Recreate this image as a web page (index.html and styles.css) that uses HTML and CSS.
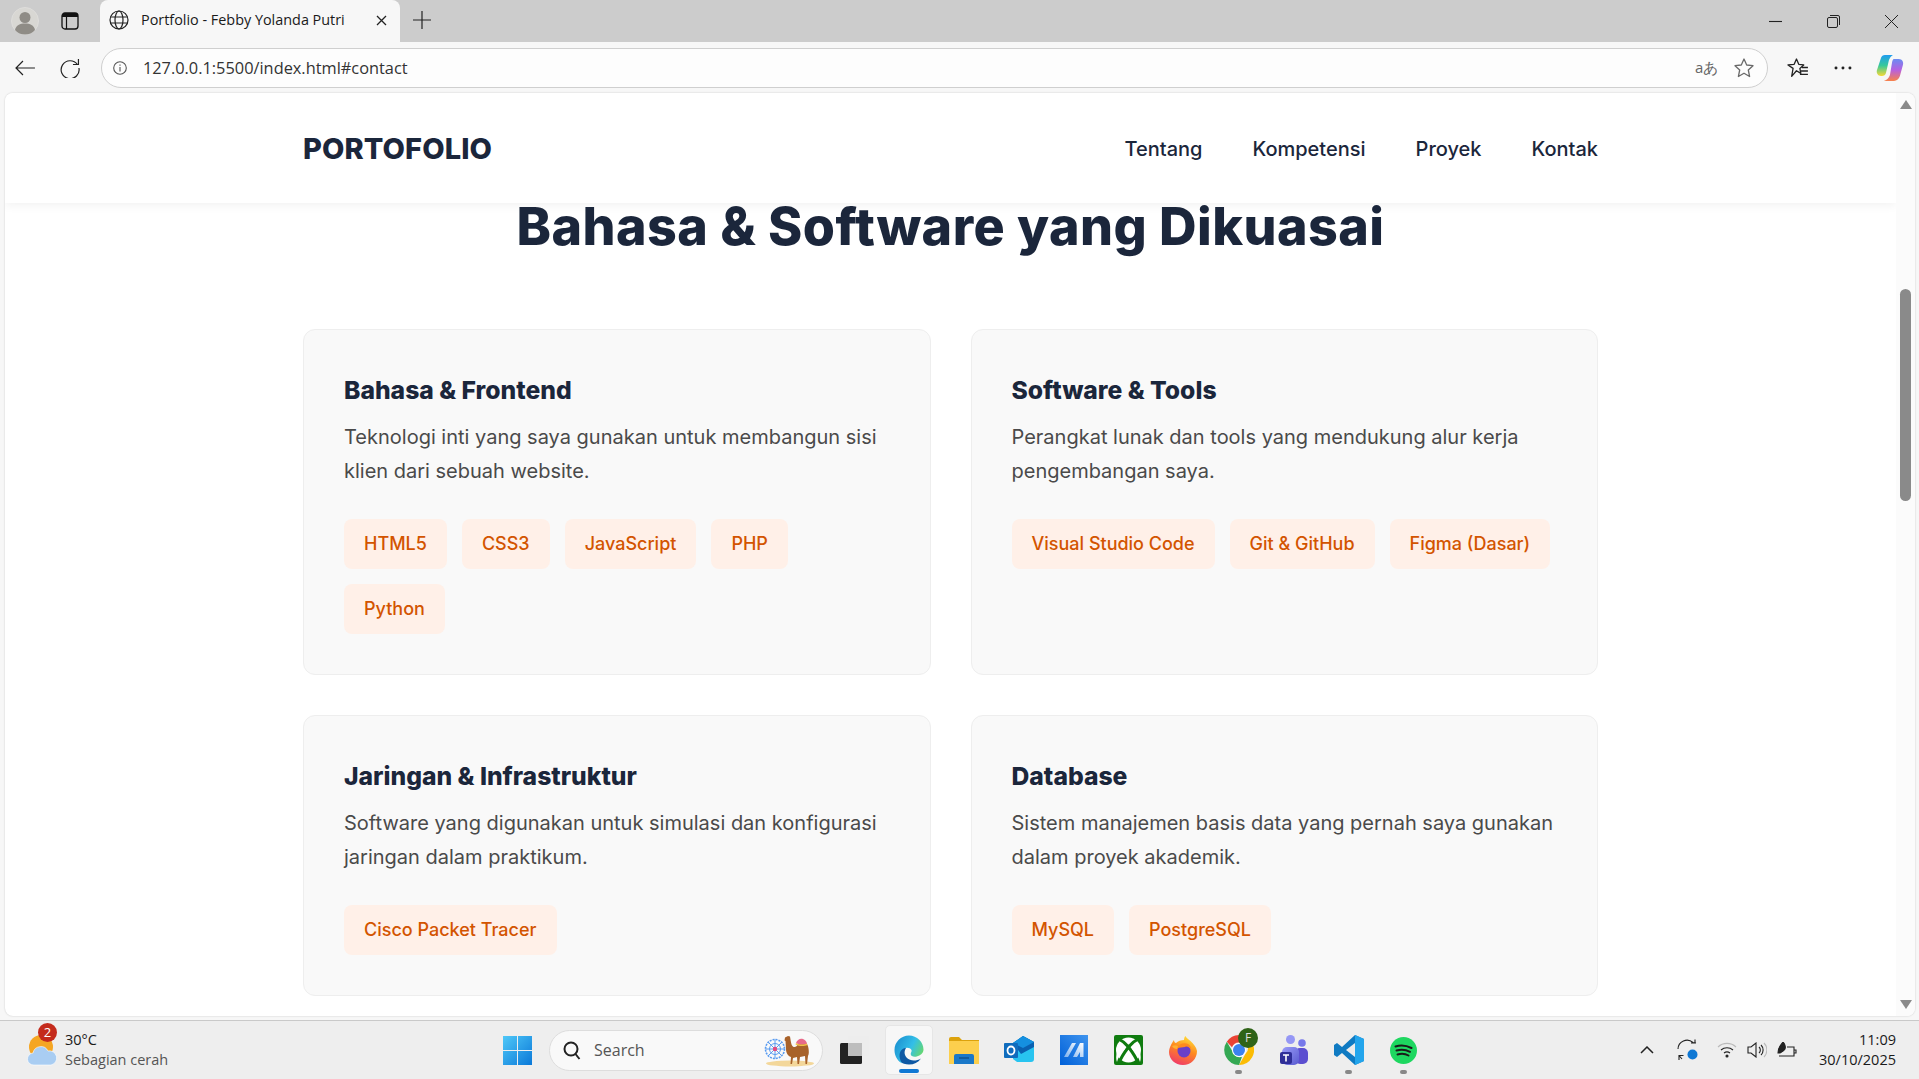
FILE: index.html
```html
<!DOCTYPE html>
<html lang="id">
<head>
    <meta charset="UTF-8">
    <title>Portfolio - Febby Yolanda Putri</title>
    <link rel="stylesheet" href="styles.css">
</head>
<body>
    <div class="tabstrip">
        <div class="profile"><svg width="28" height="28" viewBox="0 0 28 28"><circle cx="14" cy="14" r="13.500" fill="#d8d7d3" stroke="#dedddb"/><circle cx="14" cy="10.500" r="5.500" fill="#8f8c86"/><path d="M4 23c1-5 5-6.500 10-6.500s9 1.500 10 6.500c-2.500 3-6 4.500-10 4.500s-7.500-1.500-10-4.500z" fill="#8f8c86"/></svg></div>
        <div class="tabs-btn"><svg width="18" height="18" viewBox="0 0 18 18"><rect x="1" y="1" width="16" height="16" rx="3" fill="none" stroke="#111" stroke-width="1.300"/><path d="M1 4a3 3 0 0 1 3-3h10a3 3 0 0 1 3 3v1H1z" fill="#111"/><path d="M5.500 5v12" stroke="#111" stroke-width="1.200"/></svg></div>
        <div class="tab">
            <svg width="20" height="20" viewBox="0 0 20 20" fill="none" stroke="#222" stroke-width="1.200"><circle cx="10" cy="10" r="9"/><ellipse cx="10" cy="10" rx="4" ry="9"/><path d="M1.500 7h17M1.500 13h17"/></svg>
            <span class="tab-title">Portfolio - Febby Yolanda Putri</span>
            <svg class="tab-close" width="11" height="11" viewBox="0 0 11 11" stroke="#222" stroke-width="1.300"><path d="M1 1l9 9M10 1l-9 9"/></svg>
        </div>
        <svg class="new-tab" width="18" height="18" viewBox="0 0 18 18" stroke="#222" stroke-width="1.200"><path d="M9 0v18M0 9h18"/></svg>
        <div class="win-controls">
            <svg width="13" height="13" viewBox="0 0 13 13" stroke="#222" stroke-width="1.100"><path d="M0 6.500h13"/></svg>
            <svg width="13" height="13" viewBox="0 0 13 13" fill="none" stroke="#222" stroke-width="1"><rect x=".5" y="2.500" width="10" height="10" rx="1.500"/><path d="M3 .5h8a1.500 1.500 0 0 1 1.500 1.500v8"/></svg>
            <svg width="13" height="13" viewBox="0 0 13 13" stroke="#222" stroke-width="1"><path d="M0 0l13 13M13 0L0 13"/></svg>
        </div>
    </div>

    <div class="toolbar">
        <svg class="tool-back" width="20" height="16" viewBox="0 0 20 16" fill="none" stroke="#222" stroke-width="1.200"><path d="M20 8H1M8 1L1 8l7 7"/></svg>
        <svg class="tool-reload" width="20" height="20" viewBox="0 0 20 20" fill="none" stroke="#222" stroke-width="1.200"><path d="M17.500 6.500A9 9 0 1 0 19 10"/><path d="M18.500 1v5.500H13"/></svg>
        <div class="addressbar">
            <svg width="14" height="14" viewBox="0 0 14 14" fill="none" stroke="#555" stroke-width="1.100"><circle cx="7" cy="7" r="6.300"/><path d="M7 6v4.500M7 3.500v1.300"/></svg>
            <span class="url">127.0.0.1:5500/index.html#contact</span>
            <span class="translate">aあ</span>
            <svg width="22" height="22" viewBox="0 0 22 22" fill="none" stroke="#6a6a6a" stroke-width="1.300" stroke-linejoin="round"><path d="M11 2l2.700 6 6.300.7-4.700 4.300 1.300 6.500-5.600-3.300-5.600 3.300 1.300-6.500L2 8.700 8.300 8z"/></svg>
        </div>
        <svg class="tool-fav" width="22" height="20" viewBox="0 0 22 20" fill="none" stroke="#222" stroke-width="1.300" stroke-linejoin="round"><path d="M9.500 1l2.300 5.300 5 .6-3.900 3.500 1 5-4.400-2.600-4.800 5.600 1.400-8L1 6.900l6.200-.6z"/><path d="M15 9.500h6M14 13h7M13 16.500h8"/></svg>
        <svg class="tool-more" width="18" height="4" viewBox="0 0 18 4" fill="#222"><circle cx="2" cy="2" r="1.500"/><circle cx="9" cy="2" r="1.500"/><circle cx="16" cy="2" r="1.500"/></svg>
        <svg class="tool-copilot" width="28" height="28" viewBox="0 0 28 28"><defs><linearGradient id="cp1" x1="0" y1="0" x2="0" y2="1"><stop offset="0" stop-color="#1f9cf0"/><stop offset=".5" stop-color="#37c99a"/><stop offset="1" stop-color="#f6d936"/></linearGradient><linearGradient id="cp2" x1="0" y1="0" x2="0" y2="1"><stop offset="0" stop-color="#6a8cf2"/><stop offset=".5" stop-color="#b660e0"/><stop offset="1" stop-color="#f8824a"/></linearGradient></defs><path d="M9 1h8c-2 1-3 3-4 5l-3 13c-.5 2-2 3-4 3H5c-3 0-5-3-4-6L5 4c.6-2 2-3 4-3z" fill="url(#cp1)"/><path d="M18 5h5c3 0 5 3 4 6l-3 11c-1 3-3 5-6 5H8c3-1 5-3 6-6l2-12c.3-2 1-4 2-4z" fill="url(#cp2)"/></svg>
    </div>

    <div class="viewport">
        <div class="page">
            <header class="site-header">
                <div class="wrap header-inner">
                    <div class="logo">PORTOFOLIO</div>
                    <nav class="site-nav">
                        <a>Tentang</a>
                        <a>Kompetensi</a>
                        <a>Proyek</a>
                        <a>Kontak</a>
                    </nav>
                </div>
            </header>

            <section class="skills">
                <div class="wrap">
                    <h2 class="section-title">Bahasa &amp; Software yang Dikuasai</h2>
                    <div class="skill-grid">
                        <div class="skill-card">
                            <h3>Bahasa &amp; Frontend</h3>
                            <p>Teknologi inti yang saya gunakan untuk membangun sisi klien dari sebuah website.</p>
                            <div class="tag-list">
                                <span class="tag">HTML5</span>
                                <span class="tag">CSS3</span>
                                <span class="tag">JavaScript</span>
                                <span class="tag">PHP</span>
                                <span class="tag">Python</span>
                            </div>
                        </div>
                        <div class="skill-card">
                            <h3>Software &amp; Tools</h3>
                            <p>Perangkat lunak dan tools yang mendukung alur kerja pengembangan saya.</p>
                            <div class="tag-list">
                                <span class="tag">Visual Studio Code</span>
                                <span class="tag">Git &amp; GitHub</span>
                                <span class="tag">Figma (Dasar)</span>
                            </div>
                        </div>
                        <div class="skill-card">
                            <h3>Jaringan &amp; Infrastruktur</h3>
                            <p>Software yang digunakan untuk simulasi dan konfigurasi jaringan dalam praktikum.</p>
                            <div class="tag-list">
                                <span class="tag">Cisco Packet Tracer</span>
                            </div>
                        </div>
                        <div class="skill-card">
                            <h3>Database</h3>
                            <p>Sistem manajemen basis data yang pernah saya gunakan dalam proyek akademik.</p>
                            <div class="tag-list">
                                <span class="tag">MySQL</span>
                                <span class="tag">PostgreSQL</span>
                            </div>
                        </div>
                    </div>
                </div>
            </section>
        </div>
        <div class="scrollbar">
            <span class="arrow-up"></span>
            <div class="scroll-track"><div class="scroll-thumb"></div></div>
            <span class="arrow-down"></span>
        </div>
    </div>

    <div class="taskbar">
        <div class="weather">
            <div class="weather-icon">
                <svg width="30" height="34" viewBox="0 0 30 34"><circle cx="14" cy="15" r="12" fill="#f5a623"/><path d="M7 33a6 6 0 0 1-1-12 8 8 0 0 1 15-2 7 7 0 0 1 3 14z" fill="#a9cdf2" stroke="#fff" stroke-width=".6"/></svg>
                <span class="weather-badge">2</span>
            </div>
            <div class="weather-text">
                <div class="temp">30°C</div>
                <div class="cond">Sebagian cerah</div>
            </div>
        </div>

        <div class="task-center">
            <svg class="task-win" width="29" height="29" viewBox="0 0 29 29"><defs><linearGradient id="win" x1="0" y1="0" x2="1" y2="1"><stop offset="0" stop-color="#4fc8f8"/><stop offset="1" stop-color="#0a78d8"/></linearGradient></defs><path d="M0 0h14v14H0zM15 0h14v14H15zM0 15h14v14H0zM15 15h14v14H15z" fill="url(#win)"/></svg>
            <div class="task-search">
                <svg width="18" height="19" viewBox="0 0 18 19" fill="none" stroke="#222" stroke-width="2"><circle cx="8" cy="8" r="6.500"/><path d="M12.500 13l4 5"/></svg>
                <span>Search</span>
                <svg class="search-art" width="50" height="34" viewBox="0 0 50 34">
                    <ellipse cx="26" cy="30.500" rx="24" ry="3" fill="#f3d79a"/>
                    <g fill="none" stroke="#5a9cf0" stroke-width="1">
                        <circle cx="11" cy="16" r="9.500" stroke-width="1.600" stroke-dasharray="2 1"/>
                        <circle cx="11" cy="16" r="5.500"/>
                        <path d="M11 6.500v19M1.500 16h19M4.300 9.300l13.400 13.400M17.700 9.300L4.300 22.700"/>
                    </g>
                    <circle cx="11" cy="16" r="2.200" fill="#e8487e"/>
                    <path d="M21 4.500l3-1.500 2 .5.500 3c.5 3 1 7 3.500 7.500 2 .2 3-1 4-3 1-2.500 4-4 6.500-2.500 2.500 1.500 3.500 4 4 7 .5 3 .5 6-.5 7.500l-1 8h-1.500l-.5-8-5 1-1 7h-1.500l-.5-7-4 1-1 6h-1.500l.5-7c-3-1-5-4-5-8l-.5-8-1-.5z" fill="#a8622a"/>
                    <path d="M32 10c1-3 4-5 7-4 2 .7 3.500 2.500 4 4.500-3 1.500-8 1.500-11-.5z" fill="#e86a8a"/>
                    <path d="M32 10c3 2 8 2 11 .5l.3 1.500c-3 1.500-8 1.500-11.800-.5z" fill="#f2c14a"/>
                </svg>
            </div>
            <div class="task-app"><svg width="29" height="29" viewBox="0 0 29 29"><rect x="8" y="0" width="21" height="20" rx="1.500" fill="#ededed"/><rect x="0" y="7" width="22" height="21" rx="1.500" fill="#222"/><rect x="8" y="7" width="14" height="13" fill="#bdbdbd"/></svg></div>
            <div class="task-app is-active">
                <svg width="30" height="30" viewBox="0 0 30 30"><defs><linearGradient id="edge" x1="0" y1=".2" x2="1" y2=".7"><stop offset="0" stop-color="#1b8fd0"/><stop offset=".55" stop-color="#33bfe8"/><stop offset="1" stop-color="#6edb5e"/></linearGradient></defs><path d="M2 18c0 7 6 11.500 13 11.500 5 0 9-2 12-6-5 3-11 2.500-14-.5-3-3-3-7-1-10C7 11 2 13 2 18z" fill="#0d58a4"/><path d="M15 .5C7 .5.500 7 .5 15c0 6 3 11 8 13.500-3.500-4-4-10.500-1-13.500 3-3 8.500-3 10 0 .6 1.500-.8 2.500-.8 4 0 2.300 3 3.200 6 2.500 3.800-1 6.800-3.500 6.800-7C29.500 7 23 .5 15 .5z" fill="url(#edge)"/></svg>
                <span class="run-mark active-mark"></span>
            </div>
            <div class="task-app"><svg width="30" height="28" viewBox="0 0 30 28"><path d="M0 3a2 2 0 0 1 2-2h8l3 3h17v4H0z" fill="#dca20c"/><path d="M0 5h30v23H0z" fill="#fccf4d"/><path d="M5 20a2 2 0 0 1 2-2h16a2 2 0 0 1 2 2v8H5z" fill="#1a78c8"/><path d="M10 22h10" stroke="#0c4a80" stroke-width="1.200"/></svg></div>
            <div class="task-app"><svg width="30" height="28" viewBox="0 0 30 28"><path d="M9 7l10-7 11 6v17a3 3 0 0 1-3 3H13l-4-3z" fill="#28c4f0"/><path d="M19 0l11 6v5L17 18 9 7z" fill="#0a60b0"/><path d="M19 0l11 6-11 6-10-5z" fill="#1590e0"/><rect x="0" y="7" width="14" height="15" rx="1" fill="#0f6cbd"/><ellipse cx="7" cy="14.500" rx="3.500" ry="4" fill="none" stroke="#fff" stroke-width="1.800"/></svg></div>
            <div class="task-app"><svg width="28" height="30" viewBox="0 0 28 30"><defs><linearGradient id="msa" x1="0" y1="1" x2="1" y2="0"><stop offset="0" stop-color="#0060d8"/><stop offset="1" stop-color="#3f94ee"/></linearGradient><linearGradient id="msb" x1="0" y1="1" x2="1" y2="0"><stop offset="0" stop-color="#7fb2ee"/><stop offset="1" stop-color="#ffffff"/></linearGradient></defs><rect width="28" height="30" fill="url(#msa)"/><path d="M4 22L12 8h4L8 22zM13 22l7-14h3.500v14H20v-5l-3 5z" fill="url(#msb)"/></svg></div>
            <div class="task-app"><svg width="29" height="30" viewBox="0 0 29 30"><rect width="29" height="30" rx="2" fill="#107c10"/><circle cx="14.500" cy="15" r="12.500" fill="#fff"/><path d="M4.500 4C9 6 12 9 14.500 12 17 9 20 6 24.500 4" fill="none" stroke="#107c10" stroke-width="3"/><path d="M5 28c2-6 5-10 9.500-16C19 18 22 22 24 28" fill="none" stroke="#107c10" stroke-width="3"/><path d="M3 27c2-7 6-11 8-13L7 9C3 14 1 22 3 27zM26 27c-2-7-6-11-8-13l4-5c4 5 6 13 4 18z" fill="#fff"/></svg></div>
            <div class="task-app"><svg width="29" height="29" viewBox="0 0 29 29"><defs><linearGradient id="ff" x1=".7" y1="0" x2=".3" y2="1"><stop offset="0" stop-color="#ffe03a"/><stop offset=".45" stop-color="#ff8a1e"/><stop offset="1" stop-color="#f0386a"/></linearGradient></defs><path d="M2 9c1-2 2-4 3-5 0 2 1 3 2 3 2-2 5-3 8-3 0-1.500.5-3 1.500-4 .5 2 3 3 5 5 3 3 6 6 6.500 10 0 8-6 14-14 14C6 29 0 23 0 16c0-3 1-5 2-7z" fill="url(#ff)"/><circle cx="15" cy="15" r="6.500" fill="#6a3fc8"/><path d="M8 12c2-4 7-6 11-4 2 1 3 3 3 5-2-2-4-3-6-2-3 0-5 1-8 1z" fill="#ff8a1e"/><path d="M9 10c-2-1-4-1-6 0 1 2 3 3 5 3z" fill="#ffb030"/></svg></div>
            <div class="task-app">
                <svg width="30" height="30" viewBox="0 0 30 30"><path d="M15 0a15 15 0 0 1 13 7.500H15a7.500 7.500 0 0 0-7 4.700L2.800 6.800A15 15 0 0 1 15 0z" fill="#ea4335"/><path d="M28 7.500A15 15 0 0 1 15 30l6.500-11.200A7.500 7.500 0 0 0 21.500 7.500z" fill="#fbbc04"/><path d="M2.800 6.800L8.500 16.500a7.500 7.500 0 0 0 9.500 5.300L15 30A15 15 0 0 1 2.800 6.800z" fill="#34a853"/><circle cx="15" cy="15" r="7" fill="#fff"/><circle cx="15" cy="15" r="6" fill="#3b82f0"/></svg>
                <span class="avatar-badge">F</span>
                <span class="run-mark"></span>
            </div>
            <div class="task-app"><svg width="28" height="30" viewBox="0 0 28 30"><defs><linearGradient id="tm" x1="0" y1="0" x2="1" y2="1"><stop offset="0" stop-color="#9a9cf8"/><stop offset="1" stop-color="#5a5bd0"/></linearGradient></defs><circle cx="10.500" cy="4.500" r="4.500" fill="#9597f5"/><circle cx="22" cy="8" r="3.800" fill="#7678ea"/><rect x="15" y="13" width="13" height="16" rx="5" fill="#5c4fd0"/><rect x="2" y="12" width="17" height="18" rx="5" fill="url(#tm)"/><rect x="0" y="17" width="12" height="12" rx="2" fill="#2f2e98"/><path d="M3 20h6M6 20v6.500" stroke="#fff" stroke-width="1.600"/></svg></div>
            <div class="task-app">
                <svg width="30" height="30" viewBox="0 0 30 30"><path d="M21 0l9 4v22l-9 4L8 18l-5 4-3-2v-10l3-2 5 4z" fill="#0f7ac2"/><path d="M21 0l9 4v22l-9 4z" fill="#23a5ec"/><path d="M21 8l-9 7 9 7z" fill="#ececec"/></svg>
                <span class="run-mark"></span>
            </div>
            <div class="task-app">
                <svg width="27" height="27" viewBox="0 0 27 27"><circle cx="13.500" cy="13.500" r="13.500" fill="#1ed760"/><path d="M5.500 9.500c5-1.500 11-1 16 1.500M6.500 13.500c4.500-1.200 9.500-.8 13.500 1.300M7.500 17.500c3.500-1 8-.7 11 1" fill="none" stroke="#1a1a1a" stroke-width="2" stroke-linecap="round"/></svg>
                <span class="run-mark"></span>
            </div>
        </div>

        <div class="tray">
            <svg class="tray-chevron" width="14" height="8" viewBox="0 0 14 8" fill="none" stroke="#222" stroke-width="1.500"><path d="M1 7l6-6 6 6"/></svg>
            <svg class="tray-sync" width="22" height="22" viewBox="0 0 22 22" fill="none" stroke="#222" stroke-width="1.100"><path d="M1 10a9 9 0 0 1 15-6.500l3 .5M18 .5V4h-4"/><path d="M2 16.500l3 3.500M2 21v-4.500h4.500"/><circle cx="15.500" cy="15.500" r="5" fill="#0f78d4" stroke="none"/></svg>
            <svg width="20" height="16" viewBox="0 0 20 16" fill="none" stroke="#222" stroke-width="1.100"><path d="M1 5a13 13 0 0 1 18 0" stroke="#bbb"/><path d="M4 8a9 9 0 0 1 12 0M7 11a5 5 0 0 1 6 0"/><circle cx="10" cy="14" r="1" fill="#222"/></svg>
            <svg width="20" height="16" viewBox="0 0 20 16" fill="none" stroke="#222" stroke-width="1.100"><path d="M1 5h3l5-4v14l-5-4H1z"/><path d="M12 5a4 4 0 0 1 0 6M14 3a7 7 0 0 1 0 10"/><path d="M17 1a10 10 0 0 1 0 14" stroke="#bbb"/></svg>
            <svg width="21" height="16" viewBox="0 0 21 16" fill="none" stroke="#222" stroke-width="1.100"><path d="M2 14h15V5H10M17 8h2v3h-2"/><path d="M1 11C1 5 4 3 6 0c2 2 3 4 2 7-1 2-3 3-5 4z" fill="#222"/></svg>
            <div class="clock">
                <div>11:09</div>
                <div>30/10/2025</div>
            </div>
        </div>
    </div>
</body>
</html>
```

FILE: styles.css
```css
* {
    box-sizing: border-box;
}
html, body {
    margin: 0;
    height: 100%;
    overflow: hidden;
}
body {
    display: flex;
    flex-direction: column;
    font-family: "Segoe UI", "Open Sans", "Noto Sans", sans-serif;
    background: #f7f7f7;
    color: #222;
}

/* browser top */
.tabstrip {
    height: 42px;
    flex: none;
    background: #cccccc;
    display: flex;
    align-items: center;
    padding-left: 11px;
}
.profile {
    width: 28px;
    height: 28px;
}
.tabs-btn {
    margin-left: 22px;
    width: 18px;
    height: 18px;
    display: flex;
}
.tab {
    margin-left: 21px;
    width: 300px;
    height: 42px;
    background: #f7f7f7;
    border-radius: 8px 8px 0 0;
    display: flex;
    align-items: center;
    padding: 0 13px 2px 9px;
}
.tab-title {
    margin-left: 12px;
    margin-bottom: 2px;
    font-size: 14.400px;
    color: #1a1a1a;
    flex: 1;
}
.new-tab {
    margin-left: 13px;
    margin-bottom: 2px;
}
.win-controls {
    margin-left: auto;
    display: flex;
    gap: 45px;
    padding-right: 21px;
}
.toolbar {
    height: 51px;
    flex: none;
    background: #f7f7f7;
    display: flex;
    align-items: center;
    padding: 0 15px 0 15px;
}
.tool-reload {
    margin-left: 25px;
}
.addressbar {
    margin-left: 21px;
    width: 1673px;
    height: 40px;
    background: #fdfdfd;
    border: 1px solid #cfcfcf;
    border-radius: 20px;
    display: flex;
    align-items: center;
    padding: 0 12px 0 11px;
}
.url {
    margin-left: 16px;
    font-size: 16.350px;
    color: #333;
    flex: 1;
}
.translate {
    font-size: 15px;
    color: #666;
    margin-right: 15px;
}
.tool-fav {
    margin-left: 19px;
}
.tool-more {
    margin-left: 25px;
}
.tool-copilot {
    margin-left: 24px;
}

/* page */
.viewport {
    flex: none;
    height: 923px;
    margin-left: 5px;
    margin-right: 4px;
    background: #fff;
    border-radius: 8px;
    box-shadow: 0 0 2px rgba(0,0,0,0.2);
    display: flex;
    overflow: hidden;
}
.page {
    flex: 1;
    min-width: 0;
}
.wrap {
    width: 1295px;
    margin-left: 298px;
}
.site-header {
    height: 110px;
    background: #fff;
    box-shadow: 0 2px 10px rgba(0,0,0,0.06);
}
.header-inner {
    height: 100%;
    display: flex;
    align-items: center;
    justify-content: space-between;
}
.logo {
    font-family: Inter, sans-serif;
    font-weight: 800;
    font-size: 29px;
    letter-spacing: 0.1px;
    color: #1b263b;
}
.site-nav {
    display: flex;
    gap: 50px;
    padding-top: 1px;
}
.site-nav a {
    font-family: Inter, sans-serif;
    font-size: 20px;
    font-weight: 500;
    color: #1b263b;
}
.section-title {
    margin: 0;
    padding-top: 1px;
    text-align: center;
    font-family: Inter, sans-serif;
    font-weight: 800;
    font-size: 52px;
    letter-spacing: 0.45px;
    line-height: 46px;
    color: #1b263b;
}
.skill-grid {
    margin-top: 79px;
    display: grid;
    grid-template-columns: 1fr 1fr;
    gap: 40px;
}
.skill-card {
    background: #f9f9f9;
    border: 1px solid #eee;
    border-radius: 12px;
    padding: 40px;
}
.skill-card h3 {
    margin: 0 0 10px;
    font-family: Inter, sans-serif;
    font-weight: 800;
    font-size: 24.700px;
    line-height: 40px;
    color: #1b263b;
}
.skill-card p {
    margin: 0 0 31px;
    font-family: Inter, sans-serif;
    font-size: 20px;
    line-height: 34px;
    color: #4a4a4a;
}
.tag-list {
    display: flex;
    flex-wrap: wrap;
    gap: 15px;
}
.tag {
    font-family: Inter, sans-serif;
    font-size: 18px;
    font-weight: 500;
    line-height: 22px;
    padding: 14px 20px;
    border-radius: 8px;
    background: #fff0e8;
    color: #d35400;
}

/* scrollbar */
.scrollbar {
    width: 19px;
    flex: none;
    background: #fbfbfb;
    display: flex;
    flex-direction: column;
    align-items: center;
}
.arrow-up, .arrow-down {
    width: 0;
    height: 0;
    margin: 7px 0;
    border-left: 6px solid transparent;
    border-right: 6px solid transparent;
}
.arrow-up {
    border-bottom: 9px solid #8a8a8a;
}
.arrow-down {
    border-top: 9px solid #8a8a8a;
}
.scroll-track {
    flex: 1;
    width: 100%;
    padding: 173px 4px 0 4px;
}
.scroll-thumb {
    height: 212px;
    background: #8a8a8a;
    border-radius: 6px;
    width: 11px;
}

/* taskbar */
.taskbar {
    margin-top: auto;
    height: 59px;
    flex: none;
    background: #eeeeee;
    border-top: 1px solid #c9c9c9;
    display: flex;
    align-items: center;
}
.weather {
    display: flex;
    align-items: center;
    margin-left: 27px;
    width: 220px;
}
.weather-icon {
    position: relative;
    width: 30px;
    height: 36px;
}
.weather-badge {
    position: absolute;
    left: 11px;
    top: -9px;
    width: 19px;
    height: 19px;
    border-radius: 50%;
    background: #c42b1c;
    color: #fff;
    font-size: 13px;
    line-height: 19px;
    text-align: center;
}
.weather-text {
    margin-left: 8px;
    font-size: 14.500px;
    line-height: 20px;
}
.temp {
    color: #1a1a1a;
}
.cond {
    color: #555;
}
.task-center {
    display: flex;
    align-items: center;
    margin-left: 256px;
}
.task-search {
    margin-left: 17px;
    width: 274px;
    height: 41px;
    background: #f9f9f9;
    border: 1px solid #ddd;
    border-radius: 21px;
    display: flex;
    align-items: center;
    padding: 0 8px 0 13px;
    font-size: 16px;
    color: #555;
    gap: 13px;
}
.search-art {
    margin-left: auto;
}
.task-app {
    position: relative;
    width: 45px;
    height: 50px;
    margin-left: 10px;
    display: flex;
    align-items: center;
    justify-content: center;
    border-radius: 5px;
}
.task-search + .task-app {
    margin-left: 9px;
}
.task-app.is-active {
    background: #f7f7f7;
    border: 1px solid #e6e6e6;
    width: 48px;
    margin-left: 8px;
    margin-right: -2px;
}
.run-mark {
    position: absolute;
    bottom: 1px;
    left: 50%;
    margin-left: -3.500px;
    width: 7px;
    height: 4px;
    border-radius: 2px;
    background: #888;
}
.active-mark {
    width: 20px;
    margin-left: -10px;
    bottom: 1px;
    background: #0f78d4;
}
.avatar-badge {
    position: absolute;
    left: 22px;
    top: 3px;
    width: 20px;
    height: 20px;
    border-radius: 50%;
    background: #2f6318;
    color: #ddd;
    font-size: 12px;
    line-height: 20px;
    text-align: center;
}
.tray {
    margin-left: auto;
    display: flex;
    align-items: center;
    padding-right: 23px;
    gap: 10px;
}
.tray-chevron {
    margin-right: 12.500px;
}
.tray-sync {
    margin-right: 8.500px;
}
.clock {
    margin-left: 11px;
    text-align: right;
    font-size: 14.500px;
    line-height: 20px;
    color: #1a1a1a;
}
```
